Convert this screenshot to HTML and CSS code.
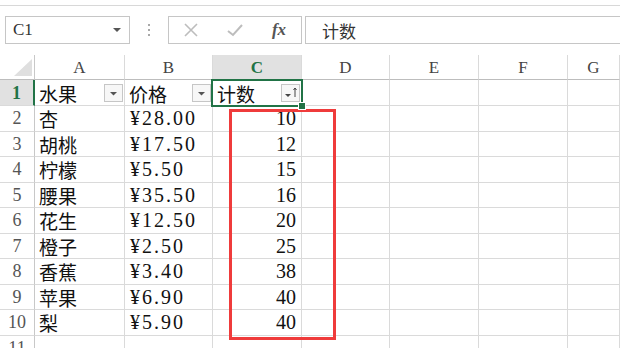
FILE: index.html
```html
<!DOCTYPE html>
<html lang="zh-CN">
<head>
  <meta charset="UTF-8">
  <title>计数</title>
  <link rel="stylesheet" href="styles.css">
</head>
<body>
  <div class="top-edge"></div>

  <!-- Name box + formula bar -->
  <div class="formula-bar">
    <div class="name-box">
      <span>C1</span>
      <span class="caret"></span>
    </div>
    <div class="grip">
      <svg width="4" height="12" viewBox="0 0 4 12">
        <rect x="1" y="0" width="2" height="2" fill="#a8a8a8"/>
        <rect x="1" y="5" width="2" height="2" fill="#a8a8a8"/>
        <rect x="1" y="10" width="2" height="2" fill="#a8a8a8"/>
      </svg>
    </div>
    <div class="fx-buttons">
      <span class="fx-btn">
        <svg width="16" height="16" viewBox="0 0 16 16">
          <path d="M2 2 L14 14 M14 2 L2 14" stroke="#bdbdbd" stroke-width="1.6" fill="none"/>
        </svg>
      </span>
      <span class="fx-btn">
        <svg width="18" height="16" viewBox="0 0 18 16">
          <path d="M2 9 L7 13 L16 3" stroke="#bdbdbd" stroke-width="2" fill="none"/>
        </svg>
      </span>
      <span class="fx-btn fx-label">fx</span>
    </div>
    <div class="formula-input">计数</div>
  </div>

  <!-- Worksheet -->
  <div class="sheet" id="sheet">
    <div class="selection"><span class="handle"></span></div>
    <div class="highlight-box"></div>
  </div>

  <script>
    const columns = ["A", "B", "C", "D", "E", "F", "G"];
    const fruits = [
      ["杏", "¥28.00", 10],
      ["胡桃", "¥17.50", 12],
      ["柠檬", "¥5.50", 15],
      ["腰果", "¥35.50", 16],
      ["花生", "¥12.50", 20],
      ["橙子", "¥2.50", 25],
      ["香蕉", "¥3.40", 38],
      ["苹果", "¥6.90", 40],
      ["梨", "¥5.90", 40]
    ];

    const sheet = document.getElementById("sheet");

    function addCell(className, text) {
      const cell = document.createElement("div");
      cell.className = "cell " + className;
      if (text !== undefined) {
        const label = document.createElement("span");
        label.textContent = text;
        cell.appendChild(label);
      }
      sheet.appendChild(cell);
      return cell;
    }

    function filterButton(sorted) {
      const btn = document.createElement("span");
      btn.className = "filter-btn";
      btn.innerHTML = sorted
        ? '<svg width="17" height="16" viewBox="0 0 17 16"><path d="M3 9 L9 9 L6 12 Z" fill="#444"/><path d="M13 12 L13 3 M11.5 5 L13 3 L14.5 5" stroke="#444" stroke-width="1" fill="none"/></svg>'
        : '<svg width="17" height="16" viewBox="0 0 17 16"><path d="M5 7 L12 7 L8.5 10.5 Z" fill="#555"/></svg>';
      return btn;
    }

    // header row
    const corner = addCell("corner");
    corner.innerHTML = '<svg width="18" height="17" viewBox="0 0 18 17"><path d="M18 0 L18 17 L0 17 Z" fill="#dfdfdf"/></svg>';
    columns.forEach(col => {
      addCell("col-head" + (col === "C" ? " active" : ""), col);
    });

    // row 1: titles with filter buttons
    addCell("row-head active", "1");
    ["水果", "价格", "计数"].forEach((title, i) => {
      const cell = addCell("title", title);
      cell.appendChild(filterButton(i === 2));
    });
    for (let i = 0; i < 4; i++) addCell("");

    // data rows
    fruits.forEach((row, idx) => {
      addCell("row-head", String(idx + 2));
      addCell("text", row[0]);
      addCell("text price", row[1]);
      addCell("num", String(row[2]));
      for (let i = 0; i < 4; i++) addCell("");
    });

    // partially visible row 11
    addCell("row-head", "11");
    for (let i = 0; i < 7; i++) addCell("");
  </script>
</body>
</html>
```

FILE: styles.css
```css
body {
  margin: 0;
  height: 348px;
  overflow: hidden;
  background-color: #fff;
  font-family: "Liberation Serif", "Noto Sans CJK SC", serif;
  color: #111;
}

.top-edge {
  height: 5px;
  border-bottom: 1px solid #d8d8d8;
}

/* formula bar */
.formula-bar {
  display: flex;
  align-items: center;
  height: 28px;
  margin: 10px 0 11px;
  padding-left: 5px;
}
.name-box {
  width: 125px;
  height: 28px;
  box-sizing: border-box;
  border: 1px solid #c6c6c6;
  display: flex;
  align-items: center;
  justify-content: space-between;
  padding: 0 8px 0 7px;
  font-size: 17px;
  color: #333;
}
.caret {
  width: 0;
  height: 0;
  border-left: 4px solid transparent;
  border-right: 4px solid transparent;
  border-top: 4px solid #555;
}
.grip {
  width: 38px;
  display: flex;
  justify-content: center;
}
.fx-buttons {
  width: 134px;
  height: 28px;
  box-sizing: border-box;
  border: 1px solid #c6c6c6;
  display: flex;
  align-items: center;
}
.fx-btn {
  width: 44px;
  display: flex;
  justify-content: center;
}
.fx-label {
  font-style: italic;
  font-weight: bold;
  font-size: 17px;
  color: #555;
}
.formula-input {
  flex: 1;
  height: 28px;
  box-sizing: border-box;
  margin: 0 -2px 0 3px;
  border: 1px solid #c6c6c6;
  padding-left: 16px;
  display: flex;
  align-items: center;
  font-size: 17px;
  color: #333;
}

/* worksheet grid */
.sheet {
  position: relative;
  display: grid;
  grid-template-columns: 35px 90px 88px 89px 88px 89px 89px 1fr;
  grid-template-rows: 25px 26px repeat(10, 25.5px);
}
.cell {
  box-sizing: border-box;
  border-right: 1px solid #dadada;
  border-bottom: 1px solid #dadada;
  display: flex;
  align-items: center;
  padding: 1px 4px 0;
  font-size: 19px;
  white-space: nowrap;
  overflow: hidden;
}
.corner {
  align-items: flex-end;
  justify-content: flex-end;
  padding: 0 2px 3px 0;
  border-right-color: #c8c8c8;
  border-bottom-color: #bdbdbd;
}
.col-head {
  justify-content: center;
  font-size: 17px;
  color: #444;
  border-bottom-color: #bdbdbd;
}
.col-head.active {
  background-color: #e1e1e1;
  color: #217346;
  font-weight: bold;
}
.row-head {
  justify-content: center;
  padding: 1px 0 0;
  font-size: 18px;
  color: #555;
  border-right-color: #c8c8c8;
}
.row-head.active {
  background-color: #e1e1e1;
  color: #217346;
  font-weight: bold;
  border-right: 2px solid #217346;
}
.title {
  justify-content: space-between;
  padding-right: 1px;
}
.price {
  padding-left: 5px;
  letter-spacing: 2px;
  font-size: 20px;
}
.num {
  justify-content: flex-end;
  padding-right: 5px;
  font-size: 20px;
}

.filter-btn {
  width: 19px;
  height: 18px;
  box-sizing: border-box;
  border: 1px solid #c6c6c6;
  background-color: #f7f7f7;
  display: flex;
  align-items: center;
  justify-content: center;
}

/* overlays */
.selection {
  position: absolute;
  left: 211px;
  top: 24px;
  width: 92px;
  height: 28px;
  box-sizing: border-box;
  border: 2px solid #217346;
  z-index: 2;
}
.handle {
  position: absolute;
  right: -5px;
  bottom: -5px;
  width: 6px;
  height: 6px;
  background-color: #217346;
  border: 1px solid #fff;
}
.highlight-box {
  position: absolute;
  left: 229px;
  top: 54px;
  width: 107px;
  height: 231px;
  box-sizing: border-box;
  border: 3px solid #ef3b3b;
  z-index: 1;
}
```
